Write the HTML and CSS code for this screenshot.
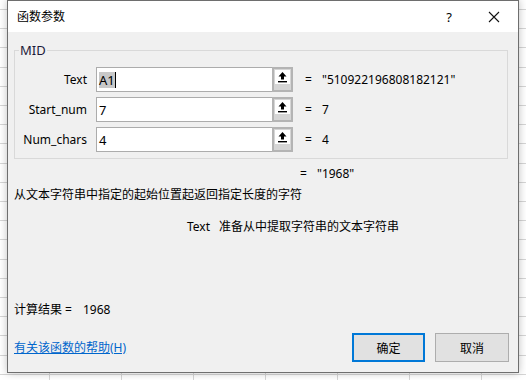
FILE: index.html
```html
<!DOCTYPE html>
<html lang="zh-CN">
<head>
    <meta charset="UTF-8">
    <title>函数参数</title>
    <link rel="stylesheet" href="styles.css">
</head>
<body>
    <div class="dialog">
        <div class="titlebar">
            <span class="title">函数参数</span>
            <span class="help-btn">?</span>
            <span class="close-btn">
                <svg width="12" height="12" viewBox="0 0 12 12"><path d="M1 1 L11 11 M11 1 L1 11" stroke="#111" stroke-width="1.1" fill="none"/></svg>
            </span>
        </div>

        <div class="content">
            <fieldset class="args">
                <legend>MID</legend>

                <div class="arg-row">
                    <label class="arg-label">Text</label>
                    <div class="arg-field">
                        <div class="arg-input"><span class="selected">A1</span><span class="caret"></span></div>
                        <div class="ref-btn"><span class="ref-icon"><svg width="11" height="12" viewBox="0 0 11 12"><path d="M5.5 1 L1.5 5.5 H4 V8.5 H7 V5.5 H9.5 Z" fill="#000"/><rect x="1" y="10" width="9" height="1.4" fill="#000"/></svg></span></div>
                    </div>
                    <span class="eq">=</span>
                    <span class="arg-value">"510922196808182121"</span>
                </div>

                <div class="arg-row">
                    <label class="arg-label">Start_num</label>
                    <div class="arg-field">
                        <div class="arg-input">7</div>
                        <div class="ref-btn"><span class="ref-icon"><svg width="11" height="12" viewBox="0 0 11 12"><path d="M5.5 1 L1.5 5.5 H4 V8.5 H7 V5.5 H9.5 Z" fill="#000"/><rect x="1" y="10" width="9" height="1.4" fill="#000"/></svg></span></div>
                    </div>
                    <span class="eq">=</span>
                    <span class="arg-value">7</span>
                </div>

                <div class="arg-row">
                    <label class="arg-label">Num_chars</label>
                    <div class="arg-field">
                        <div class="arg-input">4</div>
                        <div class="ref-btn"><span class="ref-icon"><svg width="11" height="12" viewBox="0 0 11 12"><path d="M5.5 1 L1.5 5.5 H4 V8.5 H7 V5.5 H9.5 Z" fill="#000"/><rect x="1" y="10" width="9" height="1.4" fill="#000"/></svg></span></div>
                    </div>
                    <span class="eq">=</span>
                    <span class="arg-value">4</span>
                </div>
            </fieldset>

            <div class="func-result"><span class="eq">=</span><span>"1968"</span></div>
            <div class="func-desc">从文本字符串中指定的起始位置起返回指定长度的字符</div>
            <div class="arg-desc"><span class="arg-name">Text</span><span>准备从中提取字符串的文本字符串</span></div>

            <div class="calc-result">计算结果 =<span class="calc-value">1968</span></div>

            <div class="footer">
                <a class="help-link" href="#">有关该函数的帮助(H)</a>
                <div class="buttons">
                    <button class="btn btn-ok">确定</button>
                    <button class="btn">取消</button>
                </div>
            </div>
        </div>
    </div>
</body>
</html>
```

FILE: styles.css
```css
body {
    margin: 0;
    width: 526px;
    height: 380px;
    overflow: hidden;
    font-family: "Noto Sans", "Noto Sans CJK SC", sans-serif;
    font-size: 12px;
    line-height: 16px;
    color: #000;
    background-color: #fff;
    /* spreadsheet grid behind the dialog */
    background-image:
        repeating-linear-gradient(to bottom, transparent 0, transparent 9px, #d6d6d6 9px, #d6d6d6 10px, transparent 10px, transparent 19.2px),
        repeating-linear-gradient(to right, transparent 0, transparent 49px, #d6d6d6 49px, #d6d6d6 50px, transparent 50px, transparent 72px);
}

.dialog {
    margin-left: 7px;
    width: 510px;
    height: 371px;
    border: 1px solid #6e6e6e;
    background-color: #f0f0f0;
    box-shadow: 0 0 8px rgba(0, 0, 0, 0.25);
    display: flex;
    flex-direction: column;
}

.titlebar {
    height: 31px;
    background-color: #fff;
    display: flex;
    align-items: center;
}

.title {
    padding-left: 9px;
    flex-grow: 1;
}

.help-btn {
    width: 20px;
    text-align: center;
    font-size: 13px;
    margin-right: 25px;
}

.close-btn {
    width: 20px;
    display: flex;
    justify-content: center;
    margin-right: 14px;
}

.content {
    flex-grow: 1;
    display: flex;
    flex-direction: column;
}

/* argument group box */
.args {
    margin: 10px 10px 0 6px;
    padding: 9px 0 6px 0;
    border: 1px solid #d9d9d9;
    min-width: 0;
}

.args legend {
    padding: 0 1px;
    margin-left: 4px;
    line-height: 16px;
    font-size: 13px;
    color: #1b1b3a;
}

.arg-row {
    display: flex;
    align-items: center;
    height: 25px;
    margin-bottom: 5px;
}

.arg-row:last-child {
    margin-bottom: 0;
}

.arg-label {
    width: 72px;
    text-align: right;
    margin-right: 9px;
}

.arg-field {
    display: flex;
    width: 197px;
    height: 25px;
}

.arg-input {
    flex-grow: 1;
    background-color: #fff;
    border: 1px solid #acacac;
    border-right: none;
    padding-left: 2px;
    display: flex;
    align-items: center;
    font-size: 13px;
}

.selected {
    background-color: #c8c8c8;
}

.caret {
    display: inline-block;
    width: 1px;
    height: 16px;
    background-color: #000;
}

.ref-btn {
    width: 17px;
    background-color: #d6d6d6;
    border: 2px solid #b4b4b4;
    display: flex;
    justify-content: center;
    padding-top: 1px;
}

.ref-icon {
    width: 15px;
    height: 14px;
    background-color: #fff;
    display: flex;
    justify-content: center;
    align-items: center;
}

.eq {
    margin-left: 12px;
    width: 17px;
}

.arg-value {
    font-size: 12px;
}

.func-result {
    margin-top: 7px;
    padding-left: 280px;
    display: flex;
}

.func-desc {
    margin-top: 5px;
    padding-left: 6px;
}

.arg-desc {
    margin-top: 16px;
    padding-left: 179px;
}

.arg-name {
    margin-right: 9px;
}

.calc-result {
    margin-top: 67px;
    padding-left: 6px;
}

.calc-value {
    margin-left: 11px;
}

.footer {
    margin-top: 15px;
    padding: 0 9px 0 6px;
    display: flex;
    align-items: center;
    justify-content: space-between;
}

.help-link {
    color: #0066cc;
    text-decoration: underline;
}

.buttons {
    display: flex;
    gap: 10px;
}

.btn {
    width: 74px;
    height: 29px;
    background-color: #e1e1e1;
    border: 1px solid #adadad;
    font-family: "Noto Sans CJK SC", sans-serif;
    font-size: 12px;
    color: #000;
    padding: 0;
}

.btn-ok {
    width: 73px;
    border: 2px solid #0078d7;
}
```
